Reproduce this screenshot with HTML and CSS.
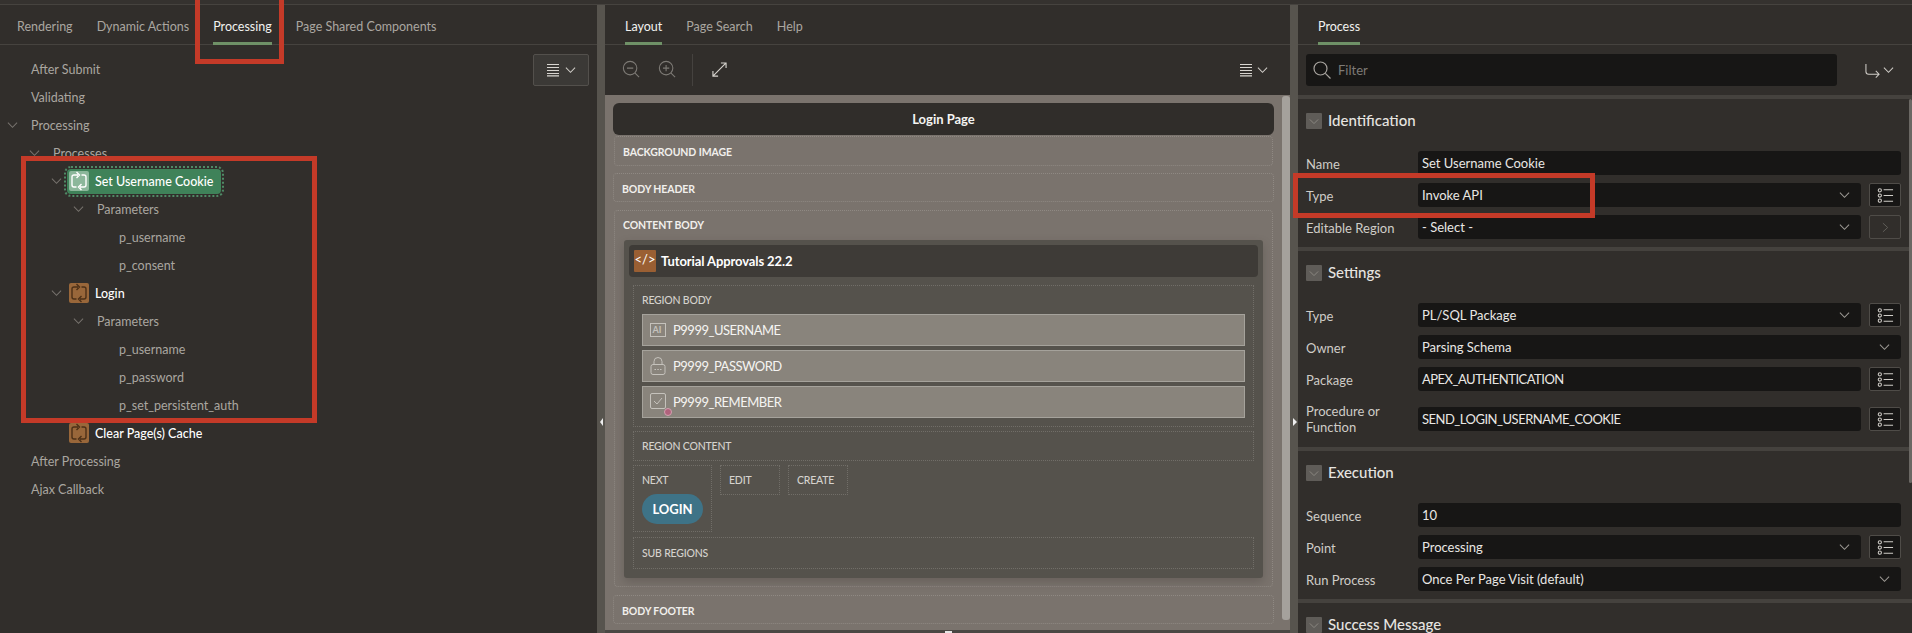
FILE: index.html
```html
<!DOCTYPE html>
<html lang="en">
<head>
<meta charset="utf-8">
<title>Page Designer</title>
<link rel="stylesheet" href="styles.css">
</head>
<body>
<svg class="defs" width="0" height="0" aria-hidden="true">
  <symbol id="chev" viewBox="0 0 12 8"><path d="M1 1.500 6 6.500 11 1.500" fill="none" stroke="currentColor" stroke-width="1.100"/></symbol>
  <symbol id="menu" viewBox="0 0 14 14"><path d="M1 1.500h12M1 4.500h12M1 7.500h12M1 10.500h12M1 12.800h12" fill="none" stroke="currentColor" stroke-width="1.200"/></symbol>
  <symbol id="proc" viewBox="0 0 20 20"><path d="M9 4H5Q3 4 3 6v8q0 2 2 2h2.500M11 16h4q2 0 2-2V6q0-2-2-2h-2.500M7.500 1 10.500 4 7.500 7M12.500 13l-3 3 3 3" fill="none" stroke="currentColor" stroke-width="1.400"/></symbol>
  <symbol id="plist" viewBox="0 0 18 18"><g fill="none" stroke="currentColor" stroke-width="1.100"><circle cx="3" cy="3.500" r="1.700"/><circle cx="3" cy="9" r="1.700"/><circle cx="3" cy="14.500" r="1.700"/><path d="M7 3h10M7 9h10M7 15h10"/></g></symbol>
</svg>

<div class="topstrip"></div>
<main class="app">
  <section class="panel left">
    <nav class="tabs">
      <a class="tab">Rendering</a><a class="tab">Dynamic Actions</a><a class="tab on">Processing</a><a class="tab">Page Shared Components</a>
    </nav>
    <div class="tree">
      <button class="menu-btn"><svg class="ic-menu"><use href="#menu"/></svg><svg class="ic-chev"><use href="#chev"/></svg></button>
      <div class="row l0"><span class="tg"></span><span class="lbl">After Submit</span></div>
      <div class="row l0"><span class="tg"></span><span class="lbl">Validating</span></div>
      <div class="row l0"><span class="tg"><svg class="ic-chev dim"><use href="#chev"/></svg></span><span class="lbl">Processing</span></div>
      <div class="row l1"><span class="tg"><svg class="ic-chev dim"><use href="#chev"/></svg></span><span class="lbl">Processes</span></div>
      <div class="row l2"><span class="tg"><svg class="ic-chev dim"><use href="#chev"/></svg></span><span class="node sel"><svg class="nico"><use href="#proc"/></svg><b>Set Username Cookie</b></span></div>
      <div class="row l3"><span class="tg"><svg class="ic-chev dim"><use href="#chev"/></svg></span><span class="lbl">Parameters</span></div>
      <div class="row l4"><span class="tg"></span><span class="lbl">p_username</span></div>
      <div class="row l4"><span class="tg"></span><span class="lbl">p_consent</span></div>
      <div class="row l2"><span class="tg"><svg class="ic-chev dim"><use href="#chev"/></svg></span><span class="node"><svg class="nico"><use href="#proc"/></svg><b>Login</b></span></div>
      <div class="row l3"><span class="tg"><svg class="ic-chev dim"><use href="#chev"/></svg></span><span class="lbl">Parameters</span></div>
      <div class="row l4"><span class="tg"></span><span class="lbl">p_username</span></div>
      <div class="row l4"><span class="tg"></span><span class="lbl">p_password</span></div>
      <div class="row l4"><span class="tg"></span><span class="lbl">p_set_persistent_auth</span></div>
      <div class="row l2"><span class="tg"></span><span class="node"><svg class="nico"><use href="#proc"/></svg><b>Clear Page(s) Cache</b></span></div>
      <div class="row l0"><span class="tg"></span><span class="lbl">After Processing</span></div>
      <div class="row l0"><span class="tg"></span><span class="lbl">Ajax Callback</span></div>
    </div>
  </section>

  <div class="gutter"><i class="tri tri-l"></i></div>

  <section class="panel center">
    <nav class="tabs">
      <a class="tab on">Layout</a><a class="tab">Page Search</a><a class="tab">Help</a>
    </nav>
    <div class="toolbar">
      <svg class="zoom-ic" viewBox="0 0 20 20"><g fill="none" stroke="currentColor" stroke-width="1.200"><circle cx="9" cy="9" r="7.500"/><path d="M14.500 14.500 19 19M5.500 9h7"/></g></svg>
      <svg class="zoom-ic" viewBox="0 0 20 20"><g fill="none" stroke="currentColor" stroke-width="1.200"><circle cx="9" cy="9" r="7.500"/><path d="M14.500 14.500 19 19M5.500 9h7M9 5.500v7"/></g></svg>
      <span class="tsep"></span>
      <svg class="expand" viewBox="0 0 16 16"><path d="M1 15 15 1M9.500 1H15v5.500M1 9.500V15h5.500" fill="none" stroke="currentColor" stroke-width="1.200"/></svg>
      <span class="grow"></span>
      <svg class="ic-menu"><use href="#menu"/></svg><svg class="ic-chev"><use href="#chev"/></svg>
    </div>
    <div class="canvas">
      <div class="stage">
        <div class="pagebar">Login Page</div>
        <div class="pos first">BACKGROUND IMAGE</div>
        <div class="pos hdr">BODY HEADER</div>
        <div class="pos body">
          <div class="pos-t">CONTENT BODY</div>
          <div class="region">
            <div class="rhead"><span class="ricon">&lt;/&gt;</span><b>Tutorial Approvals 22.2</b></div>
            <div class="slot rbody">
              <div class="slot-t">REGION BODY</div>
              <div class="item">
                <svg class="item-ic" viewBox="0 0 16 16"><rect x="0.500" y="1.500" width="15" height="13" fill="none" stroke="currentColor"/><text x="2.600" y="11" class="ai">AI</text></svg>
                <span>P9999_USERNAME</span>
              </div>
              <div class="item">
                <svg class="item-ic" viewBox="0 0 16 18"><g fill="none" stroke="currentColor"><rect x="1" y="7.500" width="14" height="10" rx="2"/><path d="M4 7.500V4.500a4 4 0 0 1 8 0v3M4.500 12.500h1.500M7.300 12.500h1.500M10 12.500h1.500"/></g></svg>
                <span>P9999_PASSWORD</span>
              </div>
              <div class="item">
                <svg class="item-ic chk" viewBox="0 0 16 16"><g fill="none" stroke="currentColor"><rect x="0.500" y="0.500" width="15" height="15" rx="1.500"/><path d="M4 8l3 3 5-6"/></g></svg>
                <span>P9999_REMEMBER</span>
                <i class="dot"></i>
              </div>
            </div>
            <div class="slot rcontent"><div class="slot-t">REGION CONTENT</div></div>
            <div class="btnrow">
              <div class="slot nextslot"><div class="slot-t">NEXT</div><div class="login">LOGIN</div></div>
              <div class="slot small"><div class="slot-t">EDIT</div></div>
              <div class="slot small"><div class="slot-t">CREATE</div></div>
            </div>
            <div class="slot subr"><div class="slot-t">SUB REGIONS</div></div>
          </div>
        </div>
        <div class="pos foot">BODY FOOTER</div>
      </div>
      <div class="sbar"><i class="thumb"></i></div>
    </div>
    <div class="botbar"><i class="grip"></i></div>
  </section>

  <div class="gutter"><i class="tri tri-r"></i></div>

  <section class="panel right">
    <nav class="tabs">
      <a class="tab on">Process</a>
    </nav>
    <div class="filterbar">
      <div class="filter">
        <svg class="search" viewBox="0 0 18 18"><g fill="none" stroke="currentColor" stroke-width="1.200"><circle cx="7.500" cy="7.500" r="6.500"/><path d="M12.300 12.300 17.500 17.500"/></g></svg>
        <span>Filter</span>
      </div>
      <svg class="goto" viewBox="0 0 16 16"><path d="M1 1v8q0 3 3 3h11M11.500 8.500 15 12l-3.500 3.500" fill="none" stroke="currentColor" stroke-width="1.100"/></svg>
      <svg class="ic-chev"><use href="#chev"/></svg>
    </div>
    <div class="props">
      <div class="group">
        <h3 class="ghead"><span class="gbox"><svg class="ic-chev"><use href="#chev"/></svg></span>Identification</h3>
        <div class="frow"><label>Name</label><div class="inp full"><span>Set Username Cookie</span></div></div>
        <div class="frow"><label>Type</label><div class="inp sel2"><span>Invoke API</span><svg class="ic-chev"><use href="#chev"/></svg></div><span class="sq"><svg class="ic-list"><use href="#plist"/></svg></span></div>
        <div class="frow"><label>Editable Region</label><div class="inp sel2"><span>- Select -</span><svg class="ic-chev"><use href="#chev"/></svg></div><span class="sq off"><svg class="ic-go" viewBox="0 0 8 12"><path d="M1 1l5.500 5L1 11" fill="none" stroke="currentColor"/></svg></span></div>
      </div>
      <div class="group">
        <h3 class="ghead"><span class="gbox"><svg class="ic-chev"><use href="#chev"/></svg></span>Settings</h3>
        <div class="frow"><label>Type</label><div class="inp sel2"><span>PL/SQL Package</span><svg class="ic-chev"><use href="#chev"/></svg></div><span class="sq"><svg class="ic-list"><use href="#plist"/></svg></span></div>
        <div class="frow"><label>Owner</label><div class="inp full sel2"><span>Parsing Schema</span><svg class="ic-chev"><use href="#chev"/></svg></div></div>
        <div class="frow"><label>Package</label><div class="inp caps"><span>APEX_AUTHENTICATION</span></div><span class="sq"><svg class="ic-list"><use href="#plist"/></svg></span></div>
        <div class="frow tall"><label>Procedure or Function</label><div class="inp caps"><span>SEND_LOGIN_USERNAME_COOKIE</span></div><span class="sq"><svg class="ic-list"><use href="#plist"/></svg></span></div>
      </div>
      <div class="group">
        <h3 class="ghead"><span class="gbox"><svg class="ic-chev"><use href="#chev"/></svg></span>Execution</h3>
        <div class="frow"><label>Sequence</label><div class="inp full"><span>10</span></div></div>
        <div class="frow"><label>Point</label><div class="inp sel2"><span>Processing</span><svg class="ic-chev"><use href="#chev"/></svg></div><span class="sq"><svg class="ic-list"><use href="#plist"/></svg></span></div>
        <div class="frow"><label>Run Process</label><div class="inp full sel2"><span>Once Per Page Visit (default)</span><svg class="ic-chev"><use href="#chev"/></svg></div></div>
      </div>
      <div class="group">
        <h3 class="ghead"><span class="gbox"><svg class="ic-chev"><use href="#chev"/></svg></span>Success Message</h3>
      </div>
      <i class="rthumb"></i>
    </div>
  </section>
</main>
<div class="mark m1"></div>
<div class="mark m2"></div>
<div class="mark m3"></div>
</body>
</html>
```

FILE: styles.css
```css
* { box-sizing: border-box; }
html, body { margin: 0; height: 100%; overflow: hidden; }
body {
  background: #312e2b;
  color: #b9b5af;
  font: 12.5px/16px Lato, "Liberation Sans", sans-serif;
  position: relative;
}
.defs { position: absolute; }
.topstrip { height: 5px; background: #35322f; }
.app { display: flex; height: 628px; box-shadow: 0 -1px 0 #46433f; position: relative; }
.panel { display: flex; flex-direction: column; min-width: 0; }
.left { width: 597px; }
.center { width: 685px; }
.right { width: 614px; }
.gutter { width: 8px; flex: none; background: #57544e; position: relative; }

.tabs { height: 40px; display: flex; align-items: flex-start; gap: 24px; padding-left: 17px; border-bottom: 1px solid #46433f; flex: none; }
.center .tabs { padding-left: 20px; }
.right .tabs { padding-left: 20px; }
.tab { line-height: 44px; height: 40px; color: #aaa6a0; white-space: nowrap; }
.tab.on { color: #f2f2f0; border-bottom: 3px solid #6f9167; }

.tree { position: relative; padding-top: 10px; }
.menu-btn {
  position: absolute; left: 533px; top: 9px; width: 56px; height: 32px;
  background: #3b3936; border: 1px solid #53504c; color: #d0cdc8; border-radius: 2px;
  display: flex; align-items: center; justify-content: center; gap: 5px; padding: 0;
}
.ic-menu { width: 14px; height: 14px; color: #d8d5d0; flex: none; }
.ic-chev { width: 11px; height: 8px; color: #d0cdc8; flex: none; }
.ic-chev.dim { color: #77736e; }
.row { height: 28px; display: flex; align-items: center; white-space: nowrap; }
.l1 { padding-left: 22px; }
.l2 { padding-left: 44px; }
.l3 { padding-left: 66px; }
.l4 { padding-left: 88px; }
.tg { width: 24px; display: flex; justify-content: center; flex: none; }
.lbl { margin-left: 7px; padding-top: 1px; color: #aaa6a0; }
.node { display: flex; align-items: center; gap: 6px; margin-left: -1px; padding: 0 8px 0 2px; height: 25px; border-radius: 4px; color: #fff; }
.node b { font-weight: 500; padding-top: 1px; }
.nico { width: 20px; height: 20px; background: #99673a; color: #4c3017; border-radius: 2px; flex: none; }
.sel { background: #3f8259; outline: 2px dotted #4f8a66; outline-offset: 1px; }
.sel .nico { background: #8cb79b; color: #fff; }

.toolbar { height: 50px; flex: none; display: flex; align-items: center; padding: 0 22px 0 17px; color: #7d7a75; }
.zoom-ic { width: 18px; height: 18px; margin-right: 18px; flex: none; margin-top: -2px; }
.tsep { width: 1px; height: 32px; background: #45423f; margin: 0 19px 0 -2px; }
.expand { width: 15px; height: 15px; color: #d5d2cd; margin-top: -2px; }
.grow { flex: 1; }
.toolbar .ic-menu { margin-right: 4px; }

.canvas { flex: 1; display: flex; background: #7a736d; min-height: 0; }
.stage { flex: 1; padding: 8px 8px 0 8px; min-width: 0; }
.pagebar {
  height: 32px; background: #302d2a; color: #f4f4f2; font-size: 13px; font-weight: 700; text-align: center;
  line-height: 33px; border-radius: 6px;
}
.pos {
  border: 1px dotted #8f8983; border-radius: 4px; margin: 7px 1px 0;
  font-size: 10.5px; letter-spacing: -.1px; font-weight: 700; color: #f1efec; line-height: 30px; height: 30px; padding-left: 8px;
}
.pos.first { margin-top: 1px; }
.pos.hdr, .pos.foot { margin-left: 0; margin-right: 0; }
.pos.hdr { height: 29px; }
.pos.foot { height: 29px; margin-top: 8px; }
.pos.body { height: 377px; margin-top: 8px; line-height: normal; padding: 7px 9px 0; }
.pos-t { line-height: 14px; margin-left: -1px; }
.region { background: #55524c; margin-top: 8px; height: 338px; padding: 5px; border-radius: 3px; box-shadow: 0 4px 10px rgba(50,45,40,.25); font-weight: 400; letter-spacing: 0; }
.rhead { height: 32px; background: #3e3b37; border-radius: 4px; display: flex; align-items: center; padding-left: 5px; color: #fff; font-size: 13px; letter-spacing: -.1px; }
.rhead b { font-weight: 700; margin-left: 5px; }
.ricon { width: 22px; height: 22px; background: #9a5f33; color: #fff; font-size: 13px; font-weight: 400; text-align: center; line-height: 19px; border-radius: 1px; letter-spacing: 0; }
.slot { border: 1px dotted #716e68; margin: 8px 4px 0; padding: 0 8px; color: #d6d3ce; font-size: 10.5px; letter-spacing: -.2px; }
.slot-t { line-height: 14px; font-weight: 500; }
.rbody { height: 142px; padding-top: 7px; }
.rbody .slot-t { margin-bottom: 7px; }
.item {
  height: 32px; background: #89847c; border: 1px solid #a5a29b; margin-bottom: 4px;
  display: flex; align-items: center; padding-left: 7px; gap: 7px; color: #f5f4f2; font-size: 13px; letter-spacing: -.5px; position: relative;
}
.item-ic { width: 16px; height: 18px; color: #c5c2bc; flex: none; }
.item-ic.chk { margin-top: -3px; }
.ai { font: 700 9px Lato, sans-serif; fill: #c5c2bc; letter-spacing: 0; }
.dot { position: absolute; left: 21px; top: 21px; width: 8px; height: 8px; border-radius: 50%; background: #b0627c; border: 1px solid #d3a0b0; }
.rcontent { height: 30px; margin-top: 4px; padding-top: 7px; }
.btnrow { display: flex; gap: 8px; margin: 4px 4px 0; }
.btnrow .slot { margin: 0; padding-top: 7px; }
.nextslot { width: 79px; height: 67px; }
.small { width: 60px; height: 30px; }
.login { width: 61px; height: 30px; margin-top: 7px; background: #3e7387; border-radius: 15px; color: #fff; font-size: 13px; font-weight: 700; letter-spacing: 0; text-align: center; line-height: 30px; }
.subr { height: 32px; margin-top: 5px; padding-top: 8px; }
.sbar { width: 8px; flex: none; padding-top: 1px; }
.thumb { display: block; width: 8px; height: 524px; background: #a5a19c; border-radius: 3px; }
.botbar { height: 3px; flex: none; background: #4a4743; position: relative; }
.grip { position: absolute; left: 340px; top: 1px; width: 7px; height: 2px; background: #e6e6e6; }

.filterbar { height: 50px; flex: none; display: flex; align-items: center; padding: 0 11px 0 8px; color: #d0cdc8; }
.filter { width: 531px; height: 32px; background: #171615; border-radius: 3px; display: flex; align-items: center; padding-left: 7px; color: #7e7a75; gap: 7px; margin-right: 28px; font-size: 13px; }
.search { width: 18px; height: 18px; color: #a8a49f; flex: none; }
.goto { width: 15px; height: 15px; margin-right: 3px; flex: none; }
.props { position: relative; flex: 1; min-height: 0; overflow: hidden; border-top: 4px solid #45423e; font-size: 13px; }
.group { padding: 0 11px 8px 8px; border-bottom: 4px solid #45423e; }
.group:last-of-type { border-bottom: 0; }
.ghead { margin: 0; height: 52px; padding-top: 14px; display: flex; align-items: flex-start; gap: 6px; color: #e6e4e0; font-size: 15px; font-weight: 500; line-height: 15px; }
.gbox { width: 16px; height: 16px; background: #5f5c58; border-radius: 1px; display: flex; align-items: center; justify-content: center; flex: none; }
.gbox .ic-chev { color: #8e8b86; width: 10px; height: 7px; }
.frow { display: flex; align-items: center; min-height: 24px; margin-bottom: 8px; color: #cfccc7; }
.frow:last-child { margin-bottom: 0; }
.frow.tall { height: 32px; margin: 12px 0 4px; }
.frow label { width: 112px; flex: none; line-height: 16px; padding-top: 1px; }
.frow.tall label { width: 100px; margin-right: 12px; padding-top: 0; }
.inp { flex: 1; height: 24px; background: #171615; border-radius: 3px; padding: 0 4px; color: #e9e7e4; display: flex; justify-content: space-between; align-items: center; white-space: nowrap; }
.inp.caps { letter-spacing: -.5px; }
.sel2 .ic-chev { margin: -1px 7px 0 0; color: #9e9a95; }
.sq { width: 32px; height: 24px; margin-left: 8px; flex: none; background: #171615; border: 1px solid #4f4c48; border-radius: 2px; display: flex; align-items: center; justify-content: center; color: #d0cdc8; }
.sq.off { background: transparent; color: #66635f; }
.ic-list { width: 17px; height: 17px; }
.ic-go { width: 7px; height: 11px; }
.rthumb { position: absolute; right: 0; top: 0; width: 3px; height: 384px; background: #6b6864; border-radius: 2px; }

.tri { position: absolute; top: 413px; width: 0; height: 0; border-top: 4px solid transparent; border-bottom: 4px solid transparent; }
.tri-l { left: 3px; border-right: 3px solid #eee; }
.tri-r { left: 3px; border-left: 4px solid #eee; }

.mark { position: absolute; border: 5px solid #c43a28; pointer-events: none; }
.m1 { left: 195px; top: -5px; width: 89px; height: 69px; }
.m2 { left: 21px; top: 156px; width: 296px; height: 267px; }
.m3 { left: 1293px; top: 173px; width: 302px; height: 45px; }
```
